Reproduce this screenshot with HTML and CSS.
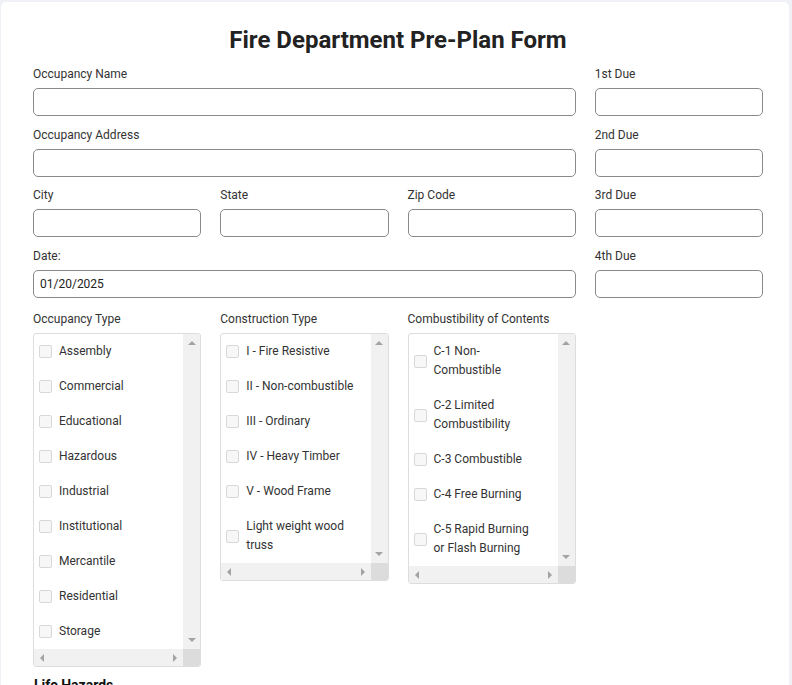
FILE: index.html
```html
<!DOCTYPE html>
<html>
<head>
  <meta charset="UTF-8">
  <title>Fire Department Pre-Plan Form</title>
  <link rel="stylesheet" href="styles.css">
</head>

<body>
  <div class="card">
    <h1 class="title">Fire Department Pre-Plan Form</h1>

    <form class="grid">
      <div class="field span3">
        <label>Occupancy Name</label>
        <input type="text">
      </div>
      <div class="field">
        <label>1st Due</label>
        <input type="text">
      </div>

      <div class="field span3">
        <label>Occupancy Address</label>
        <input type="text">
      </div>
      <div class="field">
        <label>2nd Due</label>
        <input type="text">
      </div>

      <div class="field">
        <label>City</label>
        <input type="text">
      </div>
      <div class="field">
        <label>State</label>
        <input type="text">
      </div>
      <div class="field">
        <label>Zip Code</label>
        <input type="text">
      </div>
      <div class="field">
        <label>3rd Due</label>
        <input type="text">
      </div>

      <div class="field span3">
        <label>Date:</label>
        <input type="text" value="01/20/2025">
      </div>
      <div class="field">
        <label>4th Due</label>
        <input type="text">
      </div>

      <!-- checkbox lists, each with its own scroll bars -->
      <div class="field list-field">
        <label>Occupancy Type</label>
        <div class="checklist">
          <div class="items">
            <label class="check"><input type="checkbox"><span>Assembly</span></label>
            <label class="check"><input type="checkbox"><span>Commercial</span></label>
            <label class="check"><input type="checkbox"><span>Educational</span></label>
            <label class="check"><input type="checkbox"><span>Hazardous</span></label>
            <label class="check"><input type="checkbox"><span>Industrial</span></label>
            <label class="check"><input type="checkbox"><span>Institutional</span></label>
            <label class="check"><input type="checkbox"><span>Mercantile</span></label>
            <label class="check"><input type="checkbox"><span>Residential</span></label>
            <label class="check"><input type="checkbox"><span>Storage</span></label>
          </div>
          <div class="vbar"><i class="arr up"></i><i class="arr down"></i></div>
          <div class="hbar"><i class="arr left"></i><i class="arr right"></i></div>
          <div class="corner"></div>
        </div>
      </div>
      <div class="field list-field">
        <label>Construction Type</label>
        <div class="checklist">
          <div class="items">
            <label class="check"><input type="checkbox"><span>I - Fire Resistive</span></label>
            <label class="check"><input type="checkbox"><span>II - Non-combustible</span></label>
            <label class="check"><input type="checkbox"><span>III - Ordinary</span></label>
            <label class="check"><input type="checkbox"><span>IV - Heavy Timber</span></label>
            <label class="check"><input type="checkbox"><span>V - Wood Frame</span></label>
            <label class="check"><input type="checkbox"><span>Light weight wood truss</span></label>
          </div>
          <div class="vbar"><i class="arr up"></i><i class="arr down"></i></div>
          <div class="hbar"><i class="arr left"></i><i class="arr right"></i></div>
          <div class="corner"></div>
        </div>
      </div>
      <div class="field list-field">
        <label>Combustibility of Contents</label>
        <div class="checklist">
          <div class="items">
            <label class="check"><input type="checkbox"><span>C-1 Non-Combustible</span></label>
            <label class="check"><input type="checkbox"><span>C-2 Limited Combustibility</span></label>
            <label class="check"><input type="checkbox"><span>C-3 Combustible</span></label>
            <label class="check"><input type="checkbox"><span>C-4 Free Burning</span></label>
            <label class="check"><input type="checkbox"><span>C-5 Rapid Burning or Flash Burning</span></label>
          </div>
          <div class="vbar"><i class="arr up"></i><i class="arr down"></i></div>
          <div class="hbar"><i class="arr left"></i><i class="arr right"></i></div>
          <div class="corner"></div>
        </div>
      </div>
    </form>

    <h3 class="section">Life Hazards</h3>
  </div>
</body>
</html>
```

FILE: styles.css
```css
/* page + card */
body {
  margin: 0;
  padding: 2px 3px 0 1px;
  background: #f0f1f6;
  font-family: Roboto, "Liberation Sans", sans-serif;
  color: #333;
}
.card {
  background: #fff;
  border-radius: 5px;
  padding: 24px 26px 20px 32px;
}
.title {
  margin: 0 0 13px;
  font-size: 24px;
  line-height: 28px;
  font-weight: 700;
  text-align: center;
  color: #222;
}

/* 4 column form grid */
.grid {
  display: grid;
  grid-template-columns: repeat(4, minmax(0, 1fr));
  column-gap: 19px;
  row-gap: 11.5px;
  width: 730px;
}
.span3 { grid-column: span 3; }

.field {
  display: flex;
  flex-direction: column;
}
.field > label {
  font-size: 12px;
  line-height: 14px;
  margin-bottom: 7px;
  color: #333;
}
.field > input {
  height: 28px;
  box-sizing: border-box;
  border: 1px solid #8a8a8a;
  border-radius: 5px;
  padding: 0 6px;
  font-family: inherit;
  font-size: 12px;
  color: #222;
  outline: none;
}

.list-field { align-self: start; margin-top: 3px; }
.list-field > label { margin-bottom: 7px; }

/* checkbox box: list + vertical bar / horizontal bar + corner */
.checklist {
  display: grid;
  grid-template-columns: minmax(0, 1fr) 17px;
  grid-template-rows: auto 17px;
  border: 1px solid #ddd;
  border-radius: 3px;
  overflow: hidden;
}
.items { overflow: hidden; }
.check {
  display: flex;
  align-items: center;
  padding: 8px 16.5px 8px 5px;
  font-size: 12px;
  line-height: 19px;
  color: #333;
}
.check input {
  appearance: none;
  -webkit-appearance: none;
  flex: none;
  width: 13px;
  height: 13px;
  margin: 0 7px 0 0;
  border: 1px solid #d8d8d8;
  border-radius: 2px;
  background: #f7f7f7;
}

.vbar, .hbar {
  display: flex;
  justify-content: space-between;
  align-items: center;
  background: #f1f1f1;
}
.vbar { flex-direction: column; padding: 7px 0; }
.hbar { padding: 0 6px; }
.corner { background: #dcdcdc; }

/* greyed out scroll arrows */
.arr { width: 0; height: 0; border: 0 solid transparent; }
.arr.up    { border-width: 0 4px 4px; border-bottom-color: #a3a3a3; }
.arr.down  { border-width: 4px 4px 0; border-top-color: #a3a3a3; }
.arr.left  { border-width: 4px 4px 4px 0; border-right-color: #a3a3a3; }
.arr.right { border-width: 4px 0 4px 4px; border-left-color: #a3a3a3; }

.section {
  margin: 10px 0 0 1px;
  font-size: 14px;
  font-weight: 700;
  color: #111;
}
```
